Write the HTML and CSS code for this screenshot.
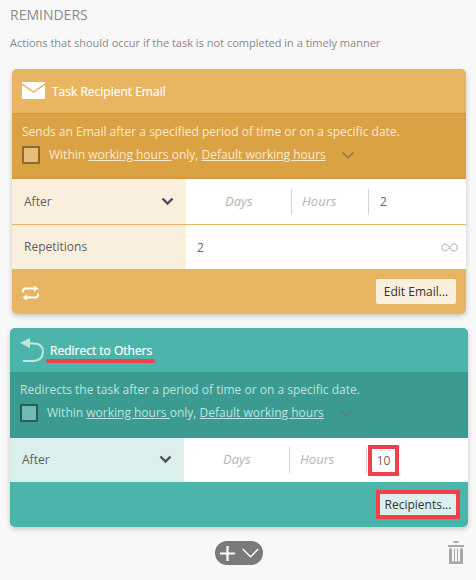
FILE: index.html
```html
<!DOCTYPE html>
<html lang="en">
<head>
    <meta charset="UTF-8">
    <title>Reminders</title>
    <link rel="stylesheet" href="styles.css">
</head>
<body>
    <div class="section-title">REMINDERS</div>
    <div class="section-note">Actions that should occur if the task is not completed in a timely manner</div>

    <!-- Email reminder -->
    <div class="card card-orange">
        <div class="card-header">
            <svg class="head-icon" width="23" height="18" viewBox="0 0 23 18">
                <rect x="0" y="0" width="23" height="17" fill="#fff"/>
                <path d="M0 2 11.5 10 23 2" fill="none" stroke="#e8b563" stroke-width="1.5"/>
            </svg>
            <span class="card-title">Task Recipient Email</span>
        </div>
        <div class="card-desc">
            <div>Sends an Email after a specified period of time or on a specific date.</div>
            <div class="hours-line">
                <span class="check"></span>
                <span>Within <u>working hours </u>only, <u>Default working hours</u></span>
                <svg class="hours-arrow" width="14" height="8" viewBox="0 0 14 8"><path d="M1.5 1.5 7 6.5 12.5 1.5" fill="none" stroke="#8a7350" stroke-width="1.5"/></svg>
            </div>
        </div>
        <div class="row row-first">
            <div class="row-label">
                <span>After</span>
                <svg width="13" height="9" viewBox="0 0 13 9"><path d="M1.5 1.5 6.5 6.5 11.5 1.5" fill="none" stroke="#4a4f5c" stroke-width="2.4"/></svg>
            </div>
            <div class="row-fields">
                <div class="field field-days">Days</div>
                <div class="field field-hours">Hours</div>
                <div class="field-value">2</div>
            </div>
        </div>
        <div class="row">
            <div class="row-label row-label-raised"><span>Repetitions</span></div>
            <div class="row-fields row-fields-wide">
                <div class="field-value">2</div>
                <svg width="17" height="9" viewBox="0 0 17 9"><path d="M8.5 4.5C6.5 1.5 5 1 3.8 1 2 1 .8 2.6 .8 4.5S2 8 3.8 8C5 8 6.5 7.5 8.5 4.5 10.5 1.5 12 1 13.2 1 15 1 16.2 2.6 16.2 4.5S15 8 13.2 8C12 8 10.5 7.5 8.5 4.5Z" fill="none" stroke="#a8a8a8" stroke-width="1"/></svg>
            </div>
        </div>
        <div class="card-footer">
            <svg class="repeat" width="17" height="16" viewBox="0 0 17 16"><path d="M1 7.5V6C1 4.5 2 3.5 3.5 3.5H13M16 8.5V10C16 11.5 15 12.5 13.5 12.5H4" fill="none" stroke="#fff" stroke-width="2"/><path d="M12 .5 16.5 3.5 12 6.5zM5 9.5 .5 12.5 5 15.5z" fill="#fff"/></svg>
            <button class="btn">Edit Email...</button>
        </div>
    </div>

    <!-- Redirect reminder -->
    <div class="card card-teal">
        <div class="card-header">
            <svg class="head-icon head-icon-back" width="24" height="24" viewBox="0 0 24 24">
                <path d="M10 0V10L0 5z" fill="#c3e5df"/>
                <path d="M8 5.5H14C19.5 5.5 23 8.5 23 14S19 23 14 23H3" fill="none" stroke="#c3e5df" stroke-width="2"/>
            </svg>
            <span class="card-title card-title-marked">Redirect to Others</span>
        </div>
        <div class="card-desc">
            <div>Redirects the task after a period of time or on a specific date.</div>
            <div class="hours-line">
                <span class="check"></span>
                <span>Within <u>working hours </u>only, <u>Default working hours</u></span>
                <svg class="hours-arrow" width="14" height="8" viewBox="0 0 14 8"><path d="M1.5 1.5 7 6.5 12.5 1.5" fill="none" stroke="#5d7d78" stroke-width="1.5"/></svg>
            </div>
        </div>
        <div class="row">
            <div class="row-label row-label-raised">
                <span>After</span>
                <svg width="13" height="9" viewBox="0 0 13 9"><path d="M1.5 1.5 6.5 6.5 11.5 1.5" fill="none" stroke="#4a4f5c" stroke-width="2.4"/></svg>
            </div>
            <div class="row-fields">
                <div class="field field-days">Days</div>
                <div class="field field-hours">Hours</div>
                <div class="field-value field-marked">10</div>
            </div>
        </div>
        <div class="card-footer card-footer-end">
            <button class="btn btn-marked">Recipients...</button>
        </div>
    </div>

    <div class="actions">
        <div class="add-pill">
            <svg width="15" height="15" viewBox="0 0 15 15"><path d="M7.5 0V15M0 7.5H15" stroke="#fff" stroke-width="2.2"/></svg>
            <svg width="17" height="10" viewBox="0 0 17 10"><path d="M.8 1 8.5 8.8 16.2 1" fill="none" stroke="#fff" stroke-width="1.4"/></svg>
        </div>
        <svg class="trash" width="16" height="23" viewBox="0 0 16 23">
            <path d="M5.5 0H10.5V2H5.5zM0 4H16V6H0z" fill="#a8a8a8"/>
            <path d="M1 7.5H4V20.5H6V7.5H7V20.5H9V7.5H10V20.5H12V7.5H15V23H1z" fill="#a8a8a8"/>
        </svg>
    </div>
</body>
</html>
```

FILE: styles.css
```css
body {
    margin: 0;
    padding: 7px 8px 0 10px;
    height: 573px;
    box-sizing: border-box;
    overflow: hidden;
    background: #f8f8f8;
    font-family: "Open Sans", sans-serif;
    font-size: 12px;
    color: #5e5e5e;
}

.section-title {
    font-size: 14px;
    line-height: 16px;
    color: #8a8a8a;
}

.section-note {
    margin-top: 12px;
    margin-bottom: 19px;
    font-size: 11px;
    line-height: 15px;
    color: #8a8a8a;
}

.card {
    width: 458px;
    border-radius: 5px;
    box-shadow: 0 2px 5px rgba(0, 0, 0, 0.2);
}

.card-orange {
    width: 454px;
    margin: 0 0 14px 2px;
    background: #e8b563;
}

.card-teal {
    background: #4cb5ab;
}

.card-header {
    display: flex;
    align-items: center;
    height: 44px;
    padding-left: 10px;
    box-sizing: border-box;
    color: #fff;
}

.head-icon {
    flex: none;
    margin-right: 7px;
}

.head-icon-back {
    margin: 0 6px 0 0;
}

.card-title {
    position: relative;
    font-size: 12px;
    -webkit-text-stroke: 0.2px #fff;
}

/* trait rouge sous le titre */
.card-title-marked::after {
    content: "";
    position: absolute;
    left: -4px;
    right: -3px;
    bottom: -4px;
    height: 4px;
    border-radius: 2px;
    background: #f0404a;
}

.card-desc {
    height: 66px;
    padding: 9px 10px 0;
    box-sizing: border-box;
    font-size: 12px;
    line-height: 18px;
}

.card-orange .card-desc {
    background: #dba243;
    border-top: 1px solid #d29a3f;
    border-bottom: 2px solid #d29a3f;
    color: #fbe9cd;
}

.card-teal .card-desc {
    background: #3b9b90;
    color: #bfe3de;
}

.hours-line {
    display: flex;
    align-items: center;
    margin-top: 5px;
}

.check {
    flex: none;
    width: 14px;
    height: 14px;
    margin-right: 9px;
    border: 2px solid #8a6a35;
    border-radius: 1px;
    background: #e8bd7a;
}

.card-teal .check {
    border-color: #245f59;
    background: #72bbb2;
}

.hours-arrow {
    margin-left: 15px;
}

.row {
    display: flex;
    height: 44px;
    background: #fff;
}

.row-first {
    height: 45px;
    border-bottom: 1px solid #e8b563;
}

.row-label {
    flex: none;
    display: flex;
    align-items: center;
    justify-content: space-between;
    width: 174px;
    padding: 0 12px;
    box-sizing: border-box;
    background: #faeedd;
}

.row-label-raised {
    padding-bottom: 2px;
}

.card-teal .row-label {
    background: #dbefec;
}

.row-fields {
    flex: 1;
    display: flex;
    align-items: center;
}

.row-fields-wide {
    justify-content: space-between;
    padding-right: 8px;
}

.field {
    height: 26px;
    line-height: 25px;
    box-sizing: border-box;
    border-right: 1px solid #d4d4d4;
    font-size: 13px;
    font-style: italic;
    color: #b5b5b5;
}

.field-days {
    width: 106px;
    padding-left: 39px;
}

.field-hours {
    width: 77px;
    padding-left: 10px;
}

.field-value {
    padding-left: 11px;
    color: #666;
}

/* encadré rouge */
.field-marked {
    height: 31px;
    width: 31px;
    margin-left: 1px;
    padding: 0;
    box-sizing: border-box;
    border: 4px solid #f0404a;
    text-align: center;
    line-height: 23px;
}

.card-footer {
    display: flex;
    align-items: center;
    justify-content: space-between;
    height: 45px;
    padding: 0 10px;
    box-sizing: border-box;
    border-radius: 0 0 5px 5px;
}

.card-footer-end {
    justify-content: flex-end;
    padding-right: 8px;
}

.repeat {
    margin-top: 3px;
}

.btn {
    width: 80px;
    height: 25px;
    padding: 0;
    border: none;
    border-radius: 2px;
    background: #faeedd;
    font-family: inherit;
    font-size: 12px;
    color: #333;
}

.btn-marked {
    width: 84px;
    height: 29px;
    border: 4px solid #f0404a;
    border-radius: 0;
    background: #dbefec;
}

.actions {
    position: relative;
    display: flex;
    justify-content: center;
    margin-top: 14px;
}

.add-pill {
    display: flex;
    align-items: center;
    gap: 7px;
    width: 48px;
    height: 24px;
    padding-left: 5px;
    box-sizing: border-box;
    border-radius: 12px;
    background: #7a7a7a;
}

.trash {
    position: absolute;
    right: 4px;
    top: 0;
}
```
